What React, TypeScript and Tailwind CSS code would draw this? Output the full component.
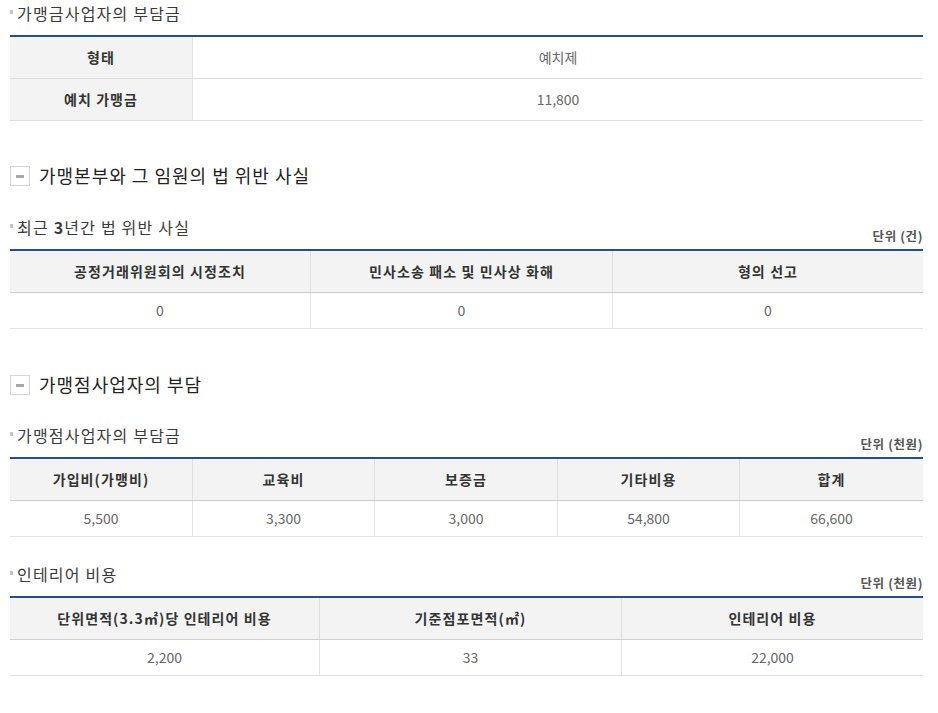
import React from "react";

const FONT = "font-['Noto_Sans_CJK_KR','Noto_Sans',sans-serif]";

function SubTitle({ text, unit }: { text: React.ReactNode; unit?: string }) {
  return (
    <div className="flex justify-between h-[34px]">
      <div className="flex items-center h-[24px] text-[16px] leading-[24px] text-[#3a3a3a]">
        <span className="inline-block w-[3px] h-[4px] bg-[#c4c4c4] mr-[4px] -mt-[2px]" />
        <span className="tracking-[1.2px]">{text}</span>
      </div>
      {unit && (
        <div className="self-end mb-[4px] text-[12.5px] leading-[18px] font-bold text-[#555] tracking-[0.6px]">{unit}</div>
      )}
    </div>
  );
}

function SectionHeading({ text }: { text: string }) {
  return (
    <div className="flex items-center h-[26px] gap-[9px]">
      <span className="w-[20px] h-[20px] border border-[#d6d6d6] bg-white flex items-center justify-center">
        <span className="w-[8px] h-[3px] bg-[#a8a8a8]" />
      </span>
      <span className="text-[18px] leading-[26px] text-[#222] tracking-[1px] -mt-[2px]">{text}</span>
    </div>
  );
}

function HCell({ children, className = "" }: { children: React.ReactNode; className?: string }) {
  return (
    <div className={`flex items-center justify-center bg-[#f3f3f3] text-[14px] font-bold text-[#333] tracking-[1.1px] ${className}`}>
      {children}
    </div>
  );
}

function DCell({ children, className = "" }: { children: React.ReactNode; className?: string }) {
  return (
    <div className={`flex items-center justify-center bg-white text-[14px] text-[#666] ${className}`}>
      {children}
    </div>
  );
}

function HTable({ cols, headers, values }: { cols: string; headers: string[]; values: string[] }) {
  return (
    <div className="border-t-2 border-[#24508a]">
      <div className={`grid ${cols} h-[42px] border-b border-[#cfcfcf]`}>
        {headers.map((h, i) => (
          <HCell key={i} className={i < headers.length - 1 ? "border-r border-[#dedede]" : ""}>
            {h}
          </HCell>
        ))}
      </div>
      <div className={`grid ${cols} h-[36px] border-b border-[#e3e3e3]`}>
        {values.map((v, i) => (
          <DCell key={i} className={i < values.length - 1 ? "border-r border-[#e3e3e3]" : ""}>
            {v}
          </DCell>
        ))}
      </div>
    </div>
  );
}

export default function App() {
  return (
    <div className={`${FONT} bg-white min-h-[713px] w-[938px] pl-[10px] pr-[15px] pt-[1px]`}>
      <SubTitle text="가맹금사업자의 부담금" />
      <div className="border-t-2 border-[#24508a]">
        <div className="flex h-[42px] border-b border-[#dedede]">
          <HCell className="w-[183px] border-r border-[#e3e3e3]">형태</HCell>
          <DCell className="flex-1">예치제</DCell>
        </div>
        <div className="flex h-[42px] border-b border-[#dedede]">
          <HCell className="w-[183px] border-r border-[#e3e3e3]">예치 가맹금</HCell>
          <DCell className="flex-1">11,800</DCell>
        </div>
      </div>

      <div className="mt-[42px]">
        <SectionHeading text="가맹본부와 그 임원의 법 위반 사실" />
      </div>
      <div className="mt-[26px]">
        <SubTitle
          text={
            <>
              최근 <b className="font-bold">3</b>년간 법 위반 사실
            </>
          }
          unit="단위 (건)"
        />
        <HTable
          cols="grid-cols-[301px_302px_1fr]"
          headers={["공정거래위원회의 시정조치", "민사소송 패소 및 민사상 화해", "형의 선고"]}
          values={["0", "0", "0"]}
        />
      </div>

      <div className="mt-[43px]">
        <SectionHeading text="가맹점사업자의 부담" />
      </div>
      <div className="mt-[25px]">
        <SubTitle text="가맹점사업자의 부담금" unit="단위 (천원)" />
        <HTable
          cols="grid-cols-[183px_182px_183px_182px_1fr]"
          headers={["가입비(가맹비)", "교육비", "보증금", "기타비용", "합계"]}
          values={["5,500", "3,300", "3,000", "54,800", "66,600"]}
        />
      </div>

      <div className="mt-[25px]">
        <SubTitle text="인테리어 비용" unit="단위 (천원)" />
        <HTable
          cols="grid-cols-[310px_302px_1fr]"
          headers={["단위면적(3.3㎡)당 인테리어 비용", "기준점포면적(㎡)", "인테리어 비용"]}
          values={["2,200", "33", "22,000"]}
        />
      </div>
    </div>
  );
}
